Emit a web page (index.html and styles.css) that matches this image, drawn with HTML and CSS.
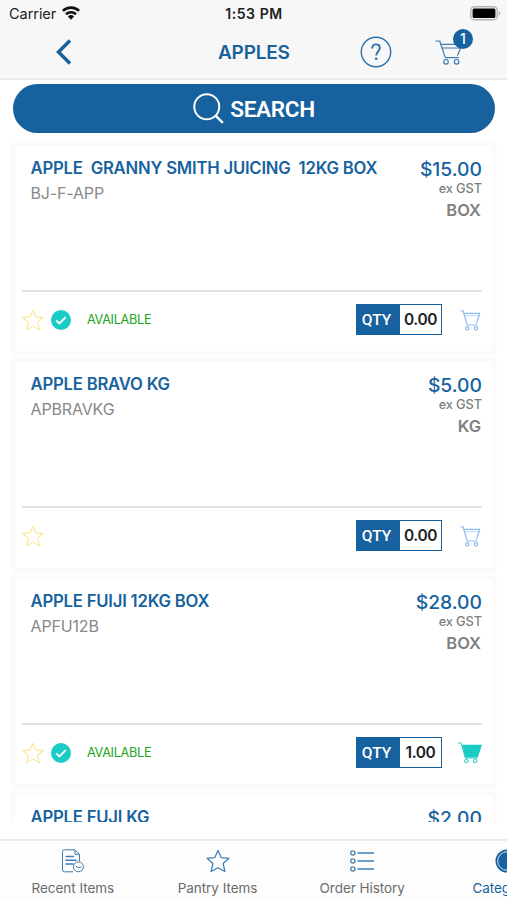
FILE: index.html
```html
<!DOCTYPE html>
<html lang="en">
<head>
<meta charset="utf-8">
<title>Apples</title>
<link rel="stylesheet" href="styles.css">
</head>
<body>
<svg class="defs" aria-hidden="true">
  <symbol id="star" viewBox="0 0 24 24"><path d="M12 1.5 15.2 8.6 23 9.3 17.1 14.5 18.9 22.5 12 18.7 5.1 22.5 6.9 14.5 1 9.3 8.8 8.6Z" fill="none" stroke="currentColor" stroke-width="1.2" stroke-linejoin="round"/></symbol>
  <symbol id="check" viewBox="0 0 20 20"><circle cx="10" cy="10" r="10" fill="#1bcbc5"/><path d="m5.2 10.4 3.2 3.1 6.3-6.4" fill="none" stroke="#fff" stroke-width="1.8"/></symbol>
  <symbol id="cart" viewBox="0 0 28 25"><g fill="none" stroke="currentColor" stroke-width="1.2" stroke-linejoin="round" stroke-linecap="round"><path d="M.7 1h4l5.600 16.600h13.200M5.700 4.400h21.500l-4.600 10.800M6.900 8h18.700"/><circle cx="11" cy="21.800" r="2.300"/><circle cx="21.600" cy="21.800" r="2.300"/></g></symbol>
  <symbol id="minicart" viewBox="0 0 21 21"><g fill="none" stroke="currentColor" stroke-width="1.200" stroke-linejoin="round" stroke-linecap="round"><path d="M.7 1h2.500l3.900 14h9.800M4 3.400h15.800l-3.300 9.800"/><path d="M4.600 5.600H19" opacity=".5"/><circle cx="7.200" cy="18.200" r="1.600"/><circle cx="16" cy="18.200" r="1.600"/></g></symbol>
  <symbol id="fullcart" viewBox="0 0 24 22"><path d="M4 2.800h20l-4.200 12.600H7.300Z" fill="currentColor"/><g fill="none" stroke="currentColor"><path d="M.3.9h2.800L7.300 16h12"/><circle cx="8.400" cy="19" r="1.800"/><circle cx="17.200" cy="19" r="1.800"/></g></symbol>
</svg>
<div class="app">
  <div class="status">
    <div class="carrier"><span>Carrier</span>
      <svg class="wifi" viewBox="0 0 18 14"><g fill="none" stroke="#111" stroke-width="2.6"><path d="M.9 4.900a11.600 11.600 0 0 1 16.200 0"/><path d="M4 8.300a7.200 7.200 0 0 1 10 0"/></g><path d="M9 13.700 5.900 10.400a4.500 4.500 0 0 1 6.200 0Z" fill="#111"/></svg>
    </div>
    <span class="time">1:53 PM</span>
    <svg class="battery" viewBox="0 0 31 15"><rect x=".8" y=".8" width="26.400" height="13" rx="3.600" fill="#f7f7f7" stroke="#b3b3b3" stroke-width="1.400"/><rect x="2.600" y="2.600" width="22.800" height="9.400" rx="1.600"/><path d="M28.800 5v4.600q3-2.300 0-4.600" fill="#aaa"/></svg>
  </div>
  <header class="header">
    <svg class="back" viewBox="0 0 16 26"><path d="M14 1.500 2.500 13 14 24.500" fill="none" stroke="#17629e" stroke-width="3.500"/></svg>
    <h1>APPLES</h1>
    <svg class="help" viewBox="0 0 32 32"><circle cx="16" cy="16" r="14.700" fill="none" stroke="#2d70a9" stroke-width="1.400"/><path d="M12.200 12.400c0-2.600 1.500-4 3.800-4s3.800 1.400 3.800 3.500c0 3.600-3.600 3.800-3.600 7.500" fill="none" stroke="#2d70a9" stroke-width="1.900"/><circle cx="16.200" cy="22.700" r="1.300" fill="#2d70a9"/></svg>
    <div class="basket"><svg><use href="#cart"/></svg><span class="badge">1</span></div>
  </header>
  <main class="list">
    <button class="search"><svg viewBox="0 0 32 32"><g fill="none" stroke="#fff" stroke-width="2"><circle cx="14.200" cy="14.200" r="12.900"/><path d="m23.300 23.300 7.500 7.500" stroke-width="2.500"/></g></svg><span>SEARCH</span></button>
    <article class="card">
      <div class="info"><div><h2>APPLE&nbsp; GRANNY SMITH JUICING&nbsp; 12KG BOX</h2><p class="code">BJ-F-APP</p></div><div class="cost"><b>$15.00</b><small>ex GST</small><em>BOX</em></div></div>
      <div class="actions"><svg class="star"><use href="#star"/></svg><svg class="check"><use href="#check"/></svg><span class="avail">AVAILABLE</span><div class="qty"><span>QTY</span><strong>0.00</strong></div><svg class="add"><use href="#minicart"/></svg></div>
    </article>
    <article class="card">
      <div class="info"><div><h2>APPLE BRAVO KG</h2><p class="code">APBRAVKG</p></div><div class="cost"><b>$5.00</b><small>ex GST</small><em>KG</em></div></div>
      <div class="actions"><svg class="star"><use href="#star"/></svg><div class="qty"><span>QTY</span><strong>0.00</strong></div><svg class="add"><use href="#minicart"/></svg></div>
    </article>
    <article class="card">
      <div class="info"><div><h2>APPLE FUIJI 12KG BOX</h2><p class="code">APFU12B</p></div><div class="cost"><b>$28.00</b><small>ex GST</small><em>BOX</em></div></div>
      <div class="actions"><svg class="star"><use href="#star"/></svg><svg class="check"><use href="#check"/></svg><span class="avail">AVAILABLE</span><div class="qty"><span>QTY</span><strong>1.00</strong></div><svg class="add full"><use href="#fullcart"/></svg></div>
    </article>
    <article class="card">
      <div class="info"><div><h2>APPLE FUJI KG</h2></div><div class="cost"><b>$2.00</b></div></div>
    </article>
  </main>
  <nav class="tabs">
    <div class="tab"><svg viewBox="0 0 24 24"><g fill="none" stroke="currentColor"><path d="M12 22.800H3.300q-1.800 0-1.800-1.800V2.600Q1.500.8 3.300.8H14l4.500 4.600v7M14 .8v4.600h4.500"/><path d="M4.500 7.500h8.500M4.500 11.300h11M4.500 15h8" stroke-width="1.500"/><circle cx="17.400" cy="17.800" r="5"/><path d="m14.800 17 2.400 1.600 3.300-.4"/></g></svg><span>Recent Items</span></div>
    <div class="tab"><svg><use href="#star"/></svg><span>Pantry Items</span></div>
    <div class="tab"><svg viewBox="0 0 24 24"><g fill="none" stroke="currentColor" stroke-width="1.300"><circle cx="2.800" cy="4" r="2.100"/><circle cx="2.800" cy="12" r="2.100"/><circle cx="2.800" cy="20" r="2.100"/><path d="M7.500 4H24M7.500 12H24M7.500 20H24"/></g></svg><span>Order History</span></div>
    <div class="tab active"><svg viewBox="0 0 24 24"><circle cx="12" cy="12" r="11.500" fill="#17629e"/><circle cx="12" cy="12" r="9.300" fill="none" stroke="#fff" stroke-width=".8"/></svg><span>Categories</span></div>
  </nav>
</div>
</body>
</html>
```
FILE: styles.css
```css
* { box-sizing: border-box; }
body { margin: 0; background: #fff; font-family: Inter, "Liberation Sans", sans-serif; }
h1, h2, p { margin: 0; white-space: nowrap; }
svg { display: block; flex: none; overflow: visible; }
.defs { position: absolute; width: 0; height: 0; }
.app { width: 507px; height: 900px; overflow: hidden; display: flex; flex-direction: column; }
.status { height: 28px; flex: none; background: #f7f7f7; display: grid; grid-template-columns: 1fr auto 1fr; align-items: center; padding: 0 6px 0 9px; color: #222; font-size: 14.5px; line-height: 28px; }
.carrier { display: flex; align-items: center; gap: 6px; letter-spacing: -.05px; }
.wifi { width: 18px; height: 14px; margin-top: -2px; }
.time { font-weight: 600; font-size: 14px; letter-spacing: .55px; margin-left: -2px; }
.battery { width: 31px; height: 15px; justify-self: end; margin-top: -2px; }
.header { height: 52px; flex: none; background: #f7f7f7; border-bottom: 2px solid #eaeaea; display: grid; grid-template-columns: 56px 162px 141.5px 75px 1fr; align-items: center; padding-bottom: 2px; }
.back { width: 16px; height: 26px; grid-column: 2; }
h1 { color: #17629e; font-size: 19px; font-weight: 600; letter-spacing: -.2px; }
.help { width: 32px; height: 32px; }
.basket { position: relative; width: 28px; height: 25px; color: #3c7db4; }
.basket svg { width: 28px; height: 25px; }
.badge { position: absolute; left: 18.5px; top: -11px; width: 20px; height: 20px; border-radius: 50%; background: #17629e; color: #fff; font-size: 14px; font-weight: 500; line-height: 20px; text-align: center; }
.list { height: 742px; flex: none; overflow: hidden; padding: 4px 15px 0; }
.search { width: 482px; height: 49px; margin: 0 -2px 13px; border: 0; border-radius: 25px; background: #17629e; color: #fff; display: flex; align-items: center; justify-content: center; gap: 6px; font: 600 22.5px/49px Roboto, sans-serif; padding: 0; }
.search svg { width: 31px; height: 31px; }
.search span { padding-top: 2px; letter-spacing: -.3px; }
.card { height: 205.3px; margin-bottom: 11px; background: #fff; box-shadow: 0 0 3px 4px #fafafa; padding: 0 10px 0 7px; }
.info { height: 146px; border-bottom: 2px solid #e3e3e3; padding: 12px 0 0 9px; display: flex; justify-content: space-between; }
h2 { color: #17629e; font-size: 16.7px; line-height: 20px; font-weight: 600; letter-spacing: -.21px; margin-left: -.5px; }
.code { color: #888; font-size: 16px; line-height: 20px; margin-top: 5px; letter-spacing: -.15px; margin-left: -.5px; }
.cost { display: flex; flex-direction: column; align-items: flex-end; color: #808080; }
.cost b { font-weight: 550; color: #17629e; font-size: 19.3px; line-height: 22px; letter-spacing: 0; }
.cost small { font-size: 12.8px; font-weight: 500; line-height: 18px; letter-spacing: -.1px; }
.cost em { font-style: normal; font-weight: 600; font-size: 16.5px; line-height: 24px; padding-right: 1px; }
.actions { height: 56px; display: flex; align-items: center; }
.star { width: 22px; height: 22px; color: #fae58c; }
.check { width: 20px; height: 20px; margin-left: 7px; }
.avail { margin-left: 16px; color: #21a421; font-size: 12.7px; letter-spacing: -.3px; margin-top: -1px; }
.qty { width: 86px; height: 31px; margin-left: auto; margin-top: -1px; border: 1px solid #17629e; background: #17629e; display: grid; grid-template: 29px / 43px 1fr; text-align: center; }
.qty span { color: #fff; font: 500 15.5px/30px Roboto, sans-serif; padding-right: 4px; }
.qty strong { background: #fff; color: #222; font-size: 15.5px; font-weight: 600; letter-spacing: -.4px; line-height: 30px; }
.add { width: 21px; height: 21px; margin-left: 18px; margin-right: 1px; color: #8fbdf2; }
.add.full { width: 24px; height: 22px; margin-left: 16px; margin-right: 0; color: #1bcbc5; }
.tabs { width: 580px; height: 61px; margin-top: 17px; flex: none; border-top: 2px solid #ebebeb; background: #fdfdfd; display: grid; grid-template-columns: repeat(4, 144.7px); padding-left: .5px; color: #6b6b6b; }
.tab { display: flex; flex-direction: column; align-items: center; padding-top: 7.5px; }
.tab svg { width: 24px; height: 24px; color: #3c7db4; }
.tab span { margin-top: 6px; font-size: 13.5px; line-height: 18px; letter-spacing: -.05px; }
.tab.active { color: #17629e; }
```
